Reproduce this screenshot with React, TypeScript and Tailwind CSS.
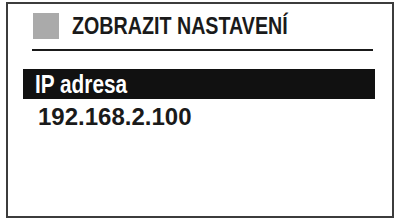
import React from "react";

export default function App() {
    return (
        <div className="w-[398px] h-[220px] bg-white overflow-hidden">
            <div className="ml-[6px] mt-[2px] w-[388px] h-[216px] border-2 border-[#3c3c3c] flex flex-col">
                {/* header */}
                <div className="flex items-center pl-[25px] pt-[9px]">
                    <div className="w-[26px] h-[26px] bg-[#aaaaaa]"/>
                    <span className="ml-[13px] inline-block origin-left scale-x-[0.82] whitespace-nowrap text-[24px] leading-none font-bold text-[#1a1a1a] font-['Liberation_Sans',Arial,sans-serif]">
                        ZOBRAZIT NASTAVENÍ
                    </span>
                </div>
                <div className="mt-[10px] ml-[24px] w-[341px] h-[2px] bg-[#1a1a1a]"/>

                {/* selected item */}
                <div className="mt-[18px] ml-[15px] w-[352px] h-[30px] bg-[#111111] pl-[12px]">
                    <span className="inline-block origin-left scale-x-[0.8] whitespace-nowrap text-[26px] leading-[30px] font-bold text-white font-['Liberation_Sans',Arial,sans-serif]">
                        IP adresa
                    </span>
                </div>
                <div className="mt-[4px] pl-[30px] text-[24px] leading-[28px] font-bold text-[#1a1a1a] font-['Liberation_Sans',Arial,sans-serif]">
                    192.168.2.100
                </div>
            </div>
        </div>
    );
}
